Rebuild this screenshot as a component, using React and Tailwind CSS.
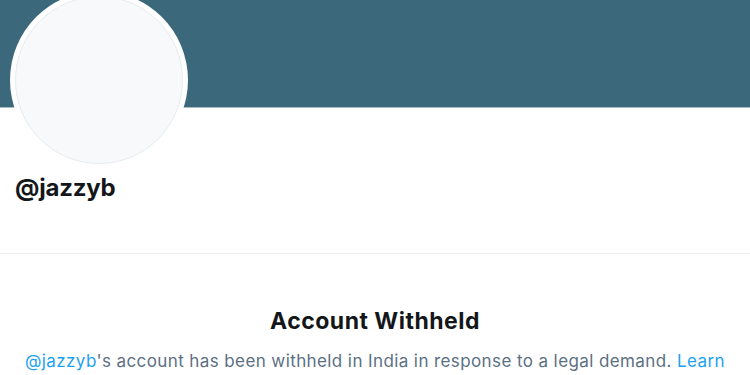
export default function App() {
  return (
    <div className="w-[750px] h-[375px] overflow-hidden bg-white" style={{ fontFamily: 'Inter, "Liberation Sans", sans-serif' }}>
      <div className="h-[108px] bg-[#3b687a] border-b border-[#a9bcc5]"></div>
      <div className="px-[10px]">
        <div className="-mt-[117px] w-[178px] h-[178px] rounded-full bg-white p-[5px]">
          <div className="w-full h-full rounded-full bg-[#f7f9fa] border border-[#e6ecf0]"></div>
        </div>
        <h1 className="mt-[4px] pl-[5px] text-[24px] leading-[30px] font-bold text-[#14171a] tracking-[-0.2px]">@jazzyb</h1>
      </div>
      <div className="mt-[50px] border-t border-[#eceff1]"></div>
      <div className="pt-[53px] px-[20px] text-center">
        <h2 className="text-[23px] leading-[28px] font-bold text-[#14171a] tracking-[0.5px]">Account Withheld</h2>
        <p className="mt-[12px] text-[17px] leading-[28px] text-[#5b7083] tracking-[0.4px]">
          <span className="text-[#1da1f2]">@jazzyb</span>'s account has been withheld in India in response to a legal demand. <span className="text-[#1da1f2]">Learn more.</span>
        </p>
      </div>
    </div>
  );
}
